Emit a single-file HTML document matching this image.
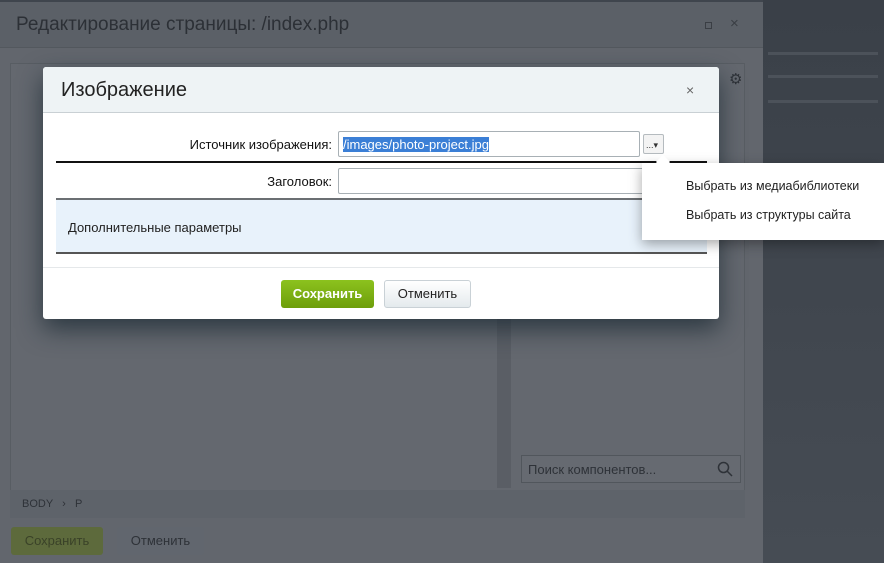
<!DOCTYPE html>
<html><head><meta charset="utf-8"><style>
*{box-sizing:border-box;margin:0;padding:0}
body{width:884px;height:563px;overflow:hidden;background:#3f454d;font-family:"Liberation Sans",sans-serif;position:relative}
.abs{position:absolute}
</style></head><body>
<div class="abs" style="left:763px;top:0;width:121px;height:563px;background:linear-gradient(#3a4048,#464c54)"></div>
<div class="abs" style="left:768px;top:52px;width:110px;height:3px;background:#4c525a"></div>
<div class="abs" style="left:768px;top:75px;width:110px;height:3px;background:#4c525a"></div>
<div class="abs" style="left:768px;top:100px;width:110px;height:3px;background:#4c525a"></div>
<!-- back window -->
<div class="abs" style="left:0;top:2px;width:763px;height:561px;background:#62666d"></div>
<div class="abs" style="left:0;top:2px;width:763px;height:46px;background:#5b6067;border-bottom:1px solid #53585e"></div>
<div class="abs" style="left:16px;top:14px;font-size:19px;color:#2c3036">Редактирование страницы: /index.php</div>
<div class="abs" style="left:705px;top:22px;width:7px;height:7px;border:1px solid #3a3e44"></div>
<div class="abs" style="left:730px;top:15px;font-size:15px;color:#3a3e44">×</div>
<div class="abs" style="left:10px;top:63px;width:735px;height:455px;border:1px solid #585d63;background:#64686f"></div>
<div class="abs" style="left:729px;top:70px;font-size:15px;color:#2e3238">⚙</div>
<div class="abs" style="left:497px;top:260px;width:14px;height:228px;background:#5a5e65"></div>
<div class="abs" style="left:521px;top:455px;width:220px;height:28px;border:1px solid #51565c;background:#666a71;font-size:13px;color:#2e3238;padding:6px 6px">Поиск компонентов...</div>
<svg class="abs" style="left:717px;top:461px" width="16" height="16"><circle cx="6.5" cy="6.5" r="5" fill="none" stroke="#2e3238" stroke-width="1.5"/><path d="M10 10l5 5" stroke="#2e3238" stroke-width="1.5"/></svg>
<div class="abs" style="left:10px;top:490px;width:735px;height:28px;background:#5e636a;font-size:11px;color:#2e3238;padding:8px 12px">BODY &nbsp; › &nbsp; P</div>
<div class="abs" style="left:11px;top:527px;width:92px;height:28px;background:#5d6a3c;border-radius:3px;font-size:13px;color:#3a4228;text-align:center;line-height:28px">Сохранить</div>
<div class="abs" style="left:117px;top:527px;width:87px;height:28px;background:#61666e;border-radius:3px;font-size:13px;color:#2e3238;text-align:center;line-height:28px">Отменить</div>
<!-- dialog -->
<div class="abs" style="left:43px;top:67px;width:676px;height:252px;background:#fff;border-radius:3px;box-shadow:0 10px 25px rgba(20,35,45,.7)"></div>
<div class="abs" style="left:43px;top:67px;width:676px;height:46px;background:#eef3f5;border-bottom:1px solid #c9d0d4;border-radius:3px 3px 0 0"></div>
<div class="abs" style="left:61px;top:79px;font-size:20px;color:#222">Изображение</div>
<div class="abs" style="left:686px;top:82px;font-size:14px;color:#666">×</div>
<div class="abs" style="left:60px;top:137px;width:272px;text-align:right;font-size:13px;color:#111">Источник изображения:</div>
<div class="abs" style="left:338px;top:131px;width:302px;height:26px;border:1px solid #a8b0b5;border-radius:2px;padding:4px 4px"><span style="background:#3b7fd6;color:#fff;font-size:13px">/images/photo-project.jpg</span></div>
<div class="abs" style="left:643px;top:134px;width:21px;height:20px;border:1px solid #b5bbbf;border-radius:2px;background:#f3f3f3;font-size:9px;padding:5px 2px;color:#333">...▾</div>
<div class="abs" style="left:56px;top:161px;width:651px;height:2px;background:#111"></div>
<div class="abs" style="left:60px;top:174px;width:272px;text-align:right;font-size:13px;color:#111">Заголовок:</div>
<div class="abs" style="left:338px;top:168px;width:310px;height:26px;border:1px solid #a8b0b5;border-radius:2px"></div>
<div class="abs" style="left:56px;top:198px;width:651px;height:56px;background:#e8f2fb;border-top:2px solid #6b6f73;border-bottom:2px solid #555"></div>
<div class="abs" style="left:68px;top:220px;font-size:13px;color:#222">Дополнительные параметры</div>
<div class="abs" style="left:43px;top:267px;width:676px;height:1px;background:#e5e8ea"></div>
<div class="abs" style="left:281px;top:280px;width:93px;height:28px;background:linear-gradient(#8cc21e,#6d9e0a);border-radius:3px;font-size:13px;font-weight:bold;color:#fff;text-align:center;line-height:28px">Сохранить</div>
<div class="abs" style="left:384px;top:280px;width:87px;height:28px;background:linear-gradient(#fff,#e4eaed);border:1px solid #c9d1d6;border-radius:3px;font-size:13px;color:#222;text-align:center;line-height:26px">Отменить</div>
<!-- popup -->
<div class="abs" style="left:642px;top:163px;width:242px;height:77px;background:#fff;box-shadow:0 4px 12px rgba(0,0,0,.35)"></div>
<div class="abs" style="left:658px;top:157px;width:10px;height:10px;background:#fff;transform:rotate(45deg)"></div>
<div class="abs" style="left:686px;top:179px;font-size:12.5px;color:#222">Выбрать из медиабиблиотеки</div>
<div class="abs" style="left:686px;top:208px;font-size:12.5px;color:#222">Выбрать из структуры сайта</div>
</body></html>
